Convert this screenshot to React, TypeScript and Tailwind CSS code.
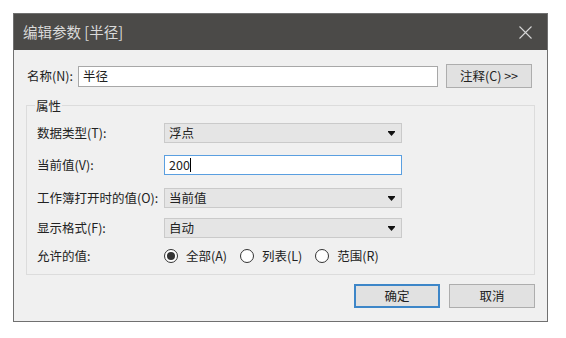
const font = { fontFamily: '"Noto Sans CJK SC", "Noto Sans", sans-serif' };

const Arrow = () => (
  <svg width="7" height="5" viewBox="0 0 7 5" className="shrink-0">
    <rect x="0" y="0" width="7" height="1" fill="#111" />
    <path d="M0 1 H7 L3.5 5 Z" fill="#111" />
  </svg>
);

const Select = ({ value }: { value: string }) => (
  <div className="w-[238px] h-[20px] bg-[#e5e5e5] border border-[#cacaca] flex items-center justify-between pl-[4px] pr-[6px] text-[#222]">
    <span>{value}</span>
    <Arrow />
  </div>
);

const Radio = ({ label, checked }: { label: string; checked?: boolean }) => (
  <div className="flex items-center gap-[8px]">
    <span className="w-[14px] h-[14px] rounded-full border border-[#333] bg-white flex items-center justify-center">
      {checked && <span className="w-[8px] h-[8px] rounded-full bg-[#333]" />}
    </span>
    <span>{label}</span>
  </div>
);

const Row = ({ label, className, children }: { label: string; className?: string; children: React.ReactNode }) => (
  <div className={`flex items-center h-[20px] ${className ?? ""}`}>
    <div className="w-[129px] pl-[2px] text-[#222]">{label}</div>
    {children}
  </div>
);

export default function App() {
  return (
    <div className="w-[566px] h-[338px] bg-white pt-[13px] pl-[13px]" style={font}>
      <div className="w-[535px] h-[309px] flex flex-col bg-[#f0f0f0] border border-[#707070]">
        <div className="h-[36px] bg-[#4b4a48] flex items-center justify-between pl-[9px] pr-[15px]">
          <span className="text-[14.5px] text-[#dadada]">编辑参数 [半径]</span>
          <svg width="13" height="13" viewBox="0 0 13 13">
            <path d="M0.5 0.5 L12.5 12.5 M12.5 0.5 L0.5 12.5" stroke="#d6d6d6" strokeWidth="1.1" />
          </svg>
        </div>

        <div className="flex-1 flex flex-col px-[12px] pt-[14px] pb-[13px] text-[12.5px] text-[#222]">
          <div className="flex items-center h-[24px]">
            <span className="w-[52px] pl-[1px]">名称(N):</span>
            <div className="w-[360px] h-[21px] bg-white border border-[#a8a8a8] flex items-center pl-[4px]">半径</div>
            <button className="ml-[8px] w-[86px] h-[24px] bg-[#e1e1e1] border border-[#adadad] text-[#222]">
              注释(C) &gt;&gt;
            </button>
          </div>

          <fieldset className="mt-[9px] border border-[#dcdcdc] pl-[8px] pr-[8px] pb-[8px]">
            <legend className="px-[1px] leading-[17px]">属性</legend>
            <div className="flex flex-col pt-[9px]">
              <Row label="数据类型(T):">
                <Select value="浮点" />
              </Row>
              <Row label="当前值(V):" className="mt-[12px]">
                <div className="w-[238px] h-[20px] bg-white border border-[#5a9fe0] flex items-center pl-[4px]">
                  <span>200</span>
                  <span className="w-px h-[14px] bg-black" />
                </div>
              </Row>
              <Row label="工作簿打开时的值(O):" className="mt-[13px]">
                <Select value="当前值" />
              </Row>
              <Row label="显示格式(F):" className="mt-[10px]">
                <Select value="自动" />
              </Row>
              <Row label="允许的值:" className="mt-[8px]">
                <div className="flex items-center gap-[13px]">
                  <Radio label="全部(A)" checked />
                  <Radio label="列表(L)" />
                  <Radio label="范围(R)" />
                </div>
              </Row>
            </div>
          </fieldset>

          <div className="mt-auto flex justify-end gap-[9px]">
            <button className="w-[86px] h-[24px] bg-[#e1e1e1] border-2 border-[#3d86c8] text-[#222]">确定</button>
            <button className="w-[86px] h-[24px] bg-[#e1e1e1] border border-[#adadad] text-[#222]">取消</button>
          </div>
        </div>
      </div>
    </div>
  );
}
